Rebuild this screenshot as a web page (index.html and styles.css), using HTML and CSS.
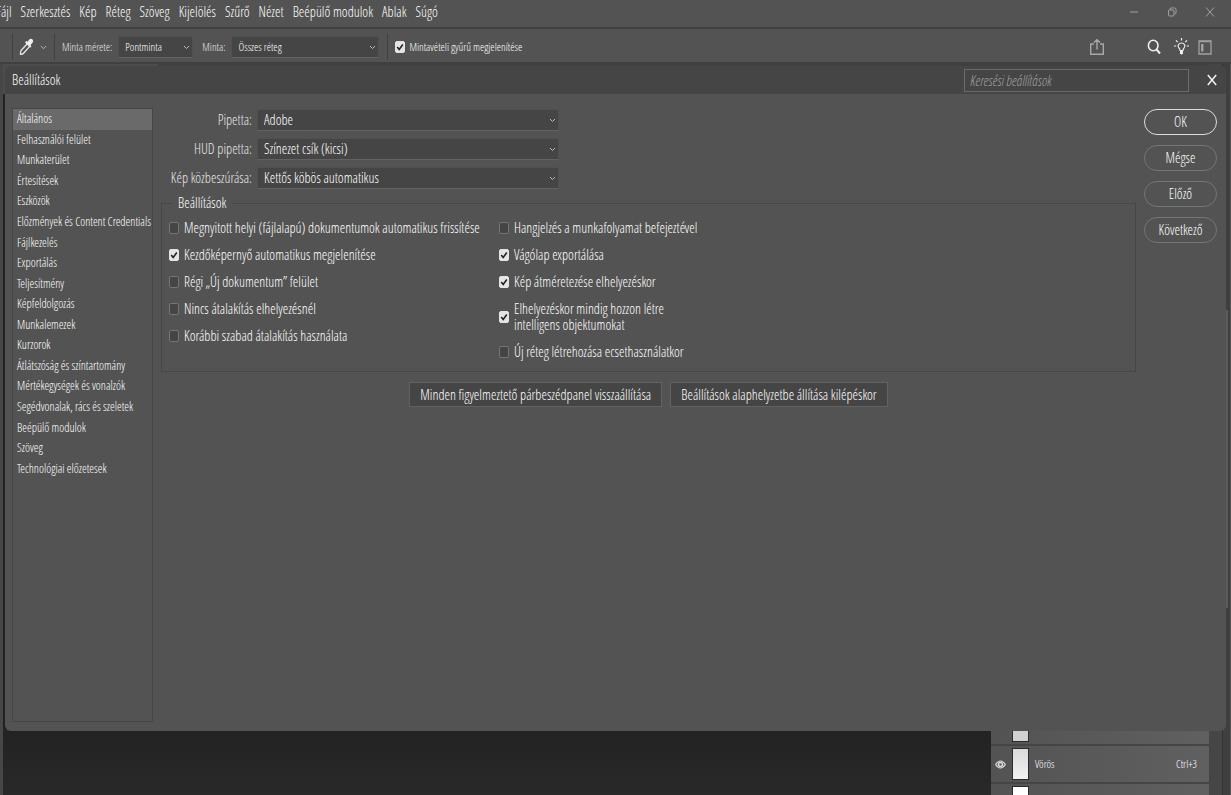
FILE: index.html
```html
<!DOCTYPE html>
<html lang="hu">
<head>
    <meta charset="UTF-8">
    <meta name="viewport" content="width=device-width, initial-scale=1.0">
    <title>Beállítások</title>
    <link rel="stylesheet" href="styles.css">
</head>
<body>
    <div class="app">
        <header class="menubar">
            <nav class="menu">
                <a href="#">Fájl</a>
                <a href="#">Szerkesztés</a>
                <a href="#">Kép</a>
                <a href="#">Réteg</a>
                <a href="#">Szöveg</a>
                <a href="#">Kijelölés</a>
                <a href="#">Szűrő</a>
                <a href="#">Nézet</a>
                <a href="#">Beépülő modulok</a>
                <a href="#">Ablak</a>
                <a href="#">Súgó</a>
            </nav>
            <div class="window-buttons">
                <button type="button" aria-label="Kis méret">
                    <svg width="10" height="10" viewBox="0 0 10 10"><path d="M1 5h8"/></svg>
                </button>
                <button type="button" aria-label="Előző méret">
                    <svg width="10" height="10" viewBox="0 0 10 10"><rect x="1.5" y="3" width="5.5" height="6" rx="1"/><path d="M3 3V2q0-1 1-1h3.500q1.500 0 1.500 1.500V6q0 1-1.500 1"/></svg>
                </button>
                <button type="button" aria-label="Bezárás">
                    <svg width="10" height="12" viewBox="0 0 10 12"><path d="M1 1.500l8 9M9 1.500l-8 9"/></svg>
                </button>
            </div>
        </header>

        <div class="toolbar">
            <button type="button" class="tool" aria-label="Pipetta">
                <svg class="eyedropper" width="15" height="18" viewBox="0 0 15 18">
                    <path d="M8 6L2.300 12.300Q1.200 13.500 1.500 16.300 3.800 16.300 4.800 15L10.400 8.600" fill="none" stroke="#e6e6e6" stroke-width="1.300"/>
                    <path d="M6 4.300l1.400-1.300 1.300.8L10.300 1.500Q12 .2 13.600 1.600q1.300 1.700-.2 3.400l-1.900 2 .9 1.400-1.400 1.400z" fill="#f0f0f0"/>
                </svg>
                <svg class="chevron" width="7" height="5" viewBox="0 0 7 5"><path d="M.8 1l2.700 2.700L6.200 1"/></svg>
            </button>
            <div class="tool-option">
                <label for="sampleSize">Minta mérete:</label>
                <select id="sampleSize" class="size-select"><option>Pontminta</option></select>
            </div>
            <div class="tool-option">
                <label for="sampleLayers">Minta:</label>
                <select id="sampleLayers" class="layer-select"><option>Összes réteg</option></select>
            </div>
            <label class="ring-option"><input type="checkbox" checked> Mintavételi gyűrű megjelenítése</label>
            <div class="toolbar-icons">
                <button type="button" class="share" aria-label="Megosztás">
                    <svg width="16" height="18" viewBox="0 0 16 18" fill="none" stroke="#a8a8a8" stroke-width="1.400"><path d="M5 6H1.700v10.300h12.600V6H11M8 11.500V2M5 4.500L8 1.600l3 2.900"/></svg>
                </button>
                <button type="button" aria-label="Keresés">
                    <svg width="14" height="16" viewBox="0 0 14 16" fill="none" stroke="#eee" stroke-width="1.600"><ellipse cx="6.200" cy="6.500" rx="4.800" ry="5.200"/><path d="M9.500 10.500l3.500 4" stroke-width="2"/></svg>
                </button>
                <button type="button" aria-label="Tippek">
                    <svg width="15" height="18" viewBox="0 0 15 18" fill="none" stroke="#eee" stroke-width="1.200"><path d="M7.500 0v2.500M2 2.300l1.700 1.900M13 2.300l-1.700 1.900M0 8h2.200M12.800 8H15M6 12.500q0-1.700-1.200-2.800Q3.700 8.300 4.400 6.800 5.400 5 7.500 5t3.100 1.800q.7 1.500-.4 2.900Q9 10.800 9 12.500z"/><path d="M6 13h3v2.300l-1.500 1.500L6 15.300z" fill="#eee" stroke="none"/></svg>
                </button>
                <button type="button" aria-label="Munkaterület">
                    <svg width="14" height="15" viewBox="0 0 14 15" fill="none" stroke="#a0a0a0" stroke-width="1.300"><path d="M1 1h12v13H1z"/><path d="M3 4h2.500v7.500H3z" fill="#a0a0a0" stroke="none"/><path d="M1 1.500h12" stroke-width="1.500"/></svg>
                </button>
            </div>
        </div>

        <main class="workspace">
            <div class="document">
                <div class="tabs"><div class="tab"></div></div>
                <div class="canvas"></div>
            </div>
            <section class="channels">
                <div class="channel"><span class="eye"></span><span class="thumb dim"></span></div>
                <div class="channel">
                    <svg class="eye" width="11" height="9" viewBox="0 0 11 9"><path d="M.7 4.500Q2.800 1 5.500 1t4.800 3.500Q8.200 8 5.500 8T.7 4.500z" fill="none" stroke="#ddd" stroke-width="1.200"/><circle cx="5.500" cy="4.500" r="2" fill="none" stroke="#ddd" stroke-width="1.500"/></svg>
                    <span class="thumb"></span>
                    <span class="name">Vörös</span>
                    <span class="shortcut">Ctrl+3</span>
                </div>
                <div class="channel clipped"><span class="eye"></span><span class="thumb light"></span></div>
            </section>
            <div class="dock"></div>
            <div class="rail"><div class="rail-thumb"></div></div>
        </main>

        <div class="dialog" role="dialog" aria-labelledby="dialogTitle">
            <div class="dialog-header">
                <h1 id="dialogTitle">Beállítások</h1>
                <input type="search" class="search" placeholder="Keresési beállítások" aria-label="Keresési beállítások">
                <button type="button" class="close" aria-label="Bezárás">
                    <svg width="10" height="12" viewBox="0 0 10 12"><path d="M.8 1l8.400 10M9.200 1L.8 11"/></svg>
                </button>
            </div>
            <div class="dialog-body">
                <aside class="sidebar">
                    <ul>
                        <li><a href="#" class="active">Általános</a></li>
                        <li><a href="#">Felhasználói felület</a></li>
                        <li><a href="#">Munkaterület</a></li>
                        <li><a href="#">Értesítések</a></li>
                        <li><a href="#">Eszközök</a></li>
                        <li><a href="#">Előzmények és Content Credentials</a></li>
                        <li><a href="#">Fájlkezelés</a></li>
                        <li><a href="#">Exportálás</a></li>
                        <li><a href="#">Teljesítmény</a></li>
                        <li><a href="#">Képfeldolgozás</a></li>
                        <li><a href="#">Munkalemezek</a></li>
                        <li><a href="#">Kurzorok</a></li>
                        <li><a href="#">Átlátszóság és színtartomány</a></li>
                        <li><a href="#">Mértékegységek és vonalzók</a></li>
                        <li><a href="#">Segédvonalak, rács és szeletek</a></li>
                        <li><a href="#">Beépülő modulok</a></li>
                        <li><a href="#">Szöveg</a></li>
                        <li><a href="#">Technológiai előzetesek</a></li>
                    </ul>
                </aside>
                <form class="settings">
                    <div class="fields">
                        <label for="picker">Pipetta:</label>
                        <select id="picker"><option>Adobe</option></select>
                        <label for="hud">HUD pipetta:</label>
                        <select id="hud"><option>Színezet csík (kicsi)</option></select>
                        <label for="interpolation">Kép közbeszúrása:</label>
                        <select id="interpolation"><option>Kettős köbös automatikus</option></select>
                    </div>
                    <fieldset>
                        <legend>Beállítások</legend>
                        <div class="options">
                            <div class="column">
                                <label><input type="checkbox"> Megnyitott helyi (fájlalapú) dokumentumok automatikus frissítése</label>
                                <label><input type="checkbox" checked> Kezdőképernyő automatikus megjelenítése</label>
                                <label><input type="checkbox"> Régi „Új dokumentum” felület</label>
                                <label><input type="checkbox"> Nincs átalakítás elhelyezésnél</label>
                                <label><input type="checkbox"> Korábbi szabad átalakítás használata</label>
                            </div>
                            <div class="column">
                                <label><input type="checkbox"> Hangjelzés a munkafolyamat befejeztével</label>
                                <label><input type="checkbox" checked> Vágólap exportálása</label>
                                <label><input type="checkbox" checked> Kép átméretezése elhelyezéskor</label>
                                <label><input type="checkbox" checked> <span>Elhelyezéskor mindig hozzon létre<br>intelligens objektumokat</span></label>
                                <label><input type="checkbox"> Új réteg létrehozása ecsethasználatkor</label>
                            </div>
                        </div>
                    </fieldset>
                    <div class="reset-buttons">
                        <button type="button">Minden figyelmeztető párbeszédpanel visszaállítása</button>
                        <button type="button">Beállítások alaphelyzetbe állítása kilépéskor</button>
                    </div>
                </form>
                <div class="actions">
                    <button type="button" class="primary">OK</button>
                    <button type="button">Mégse</button>
                    <button type="button">Előző</button>
                    <button type="button">Következő</button>
                </div>
            </div>
        </div>
    </div>
</body>
</html>
```
FILE: styles.css
```css
* {
    box-sizing: border-box;
}
body {
    margin: 0;
    background: #535353;
    color: #fff;
    font-family: "Open Sans Condensed Light", "Open Sans Condensed", "Roboto Condensed", sans-serif;
    font-size: 14px;
    font-weight: 300;
    line-height: 16px;
}
a {
    color: inherit;
    text-decoration: none;
}
button, input, select {
    font: inherit;
    color: inherit;
}
button {
    background: none;
    border: none;
    padding: 0;
}
svg {
    display: block;
}
.app {
    position: relative;
    height: 100vh;
    display: flex;
    flex-direction: column;
    overflow: hidden;
}

/* menu */
.menubar {
    flex: none;
    height: 29px;
    display: flex;
    justify-content: space-between;
    padding-bottom: 3px;
    border-bottom: 2px solid #404040;
}
.menu {
    display: flex;
    align-items: center;
    gap: 9px;
    margin-left: -4px;
    white-space: nowrap;
}
.window-buttons {
    display: flex;
    align-items: center;
    gap: 28px;
    padding-right: 16px;
}
.window-buttons svg {
    fill: none;
    stroke: #a0a0a0;
}

/* tool options */
.toolbar {
    flex: none;
    height: 35px;
    display: flex;
    align-items: center;
    padding: 3px 0 0 12px;
    border-bottom: 2px solid #404040;
    font-size: 11px;
    white-space: nowrap;
}
.tool {
    display: flex;
    align-items: center;
    gap: 6px;
    height: 26px;
    width: 43px;
    padding-left: 6px;
    border-left: 1px solid #404040;
    border-right: 1px solid #404040;
}
.chevron {
    fill: none;
    stroke: #bbb;
}
.tool-option {
    display: flex;
    align-items: center;
    padding-left: 7px;
}
.tool-option label {
    color: #e6e6e6;
    margin-right: 6px;
}
.tool-option + .tool-option {
    padding-left: 9px;
}
select {
    appearance: none;
    height: 22px;
    padding: 0 16px 0 6px;
    border: 1px solid #505050;
    border-bottom-color: #626262;
    border-radius: 0;
    background: #454545 url("data:image/svg+xml,%3Csvg xmlns='http://www.w3.org/2000/svg' width='7' height='5'%3E%3Cpath d='M1 1l2.500 2.500L6 1' fill='none' stroke='%23bbb'/%3E%3C/svg%3E") no-repeat right 2px center;
}
.size-select {
    width: 75px;
}
.layer-select {
    width: 148px;
}
.ring-option {
    display: flex;
    align-items: center;
    gap: 4px;
    height: 26px;
    margin-left: 8px;
    padding-left: 7px;
    border-left: 1px solid #404040;
}
input[type="checkbox"] {
    appearance: none;
    flex: none;
    width: 10px;
    height: 12px;
    margin: 0;
    border: 1px solid #757575;
    border-radius: 2px;
    background: #454545;
}
input[type="checkbox"]:checked {
    border-color: #e4e4e4;
    background: #e4e4e4 url("data:image/svg+xml,%3Csvg xmlns='http://www.w3.org/2000/svg' width='8' height='8'%3E%3Cpath d='M1.200 4l2 2.500L6.800 1.500' fill='none' stroke='%23222' stroke-width='1.600'/%3E%3C/svg%3E") no-repeat center;
}
.toolbar-icons {
    display: flex;
    align-items: center;
    gap: 13px;
    margin-left: auto;
    padding-right: 19px;
}
.toolbar-icons button + button + button + button {
    margin-left: -4px;
}
.toolbar-icons .share {
    margin-right: 29px;
}

/* workspace behind the dialog */
.workspace {
    flex: 1;
    min-height: 0;
    display: flex;
    border-left: 3px solid #474747;
    background: #3e3e3e;
}
.document {
    flex: 1;
    display: flex;
    flex-direction: column;
}
.tabs {
    height: 30px;
    background: #404040;
}
.tab {
    width: 155px;
    height: 100%;
    background: #4c4c4c;
}
.canvas {
    flex: 1;
    background: linear-gradient(#222 630px, #292929);
}
.channels {
    width: 218px;
    display: flex;
    flex-direction: column;
    justify-content: flex-end;
    background: #404040;
    font-size: 11px;
}
.channel {
    flex: none;
    height: 38px;
    display: flex;
    align-items: center;
    padding: 0 12px 0 4px;
    border-bottom: 2px solid #454545;
    background: linear-gradient(to right, #535353, #606060);
}
.eye {
    width: 11px;
}
.thumb {
    width: 17px;
    height: 32px;
    margin: 0 6px;
    border: 1px solid #2b2b2b;
    background: linear-gradient(#dadada, #f2f2f2);
}
.thumb.dim {
    background: #d0d0d0;
}
.thumb.light {
    background: #fff;
}
.shortcut {
    margin-left: auto;
}
.channel.clipped {
    height: 11px;
    align-items: flex-start;
    padding-top: 2px;
    border: none;
    overflow: hidden;
}
.dock {
    width: 14px;
    background: #464646;
    border-right: 1px solid #333;
}
.rail {
    width: 8px;
    padding: 246px 2px 0 3px;
    border-right: 1px solid #555;
    background: #3f3f3f;
}
.rail-thumb {
    height: 298px;
    background: #5c5c5c;
}

/* dialog */
.dialog {
    position: absolute;
    inset: 66px 5px 64px 5px;
    display: flex;
    flex-direction: column;
    border-radius: 6px;
    background: #535353;
    overflow: hidden;
}
.dialog-header {
    flex: none;
    height: 28px;
    display: flex;
    align-items: center;
    padding: 0 9px 0 7px;
    background: #454545;
}
h1 {
    margin: 0;
    font-size: 14px;
    font-weight: inherit;
}
.search {
    appearance: none;
    width: 225px;
    height: 23px;
    margin-left: auto;
    padding: 0 5px;
    border: 1px solid #6a6a6a;
    background: #454545;
    font-style: italic;
}
.search::placeholder {
    color: #a0a0a0;
}
.close {
    margin-left: 18px;
}
.close svg {
    fill: none;
    stroke: #f2f2f2;
    stroke-width: 1.5;
}
.dialog-body {
    flex: 1;
    min-height: 0;
    display: flex;
    padding: 14px 9px 9px 7px;
}
.sidebar {
    flex: none;
    width: 141px;
    border: 1px solid #464646;
    font-size: 12px;
}
.sidebar ul {
    display: grid;
    grid-auto-rows: 1fr;
    height: 370px;
    margin: 0;
    padding: 0;
    list-style: none;
}
.sidebar li {
    display: flex;
}
.sidebar a {
    flex: 1;
    display: flex;
    align-items: center;
    padding-left: 4px;
    white-space: nowrap;
}
.sidebar a.active {
    background: #6a6a6a;
}
.settings {
    flex: 1;
    margin: 0 8px;
}
.fields {
    display: grid;
    grid-template-columns: 91px 302px;
    column-gap: 5px;
    row-gap: 7px;
    align-items: center;
    padding-top: 1px;
}
.fields label {
    color: #e6e6e6;
    text-align: right;
    white-space: nowrap;
}
fieldset {
    min-width: 0;
    margin: 6px 0 0;
    padding: 9px 7px 11px;
    border: 1px solid #464646;
}
legend {
    margin-left: 3px;
    padding: 0 6px;
}
.options {
    display: grid;
    grid-template-columns: 330px 1fr;
}
.column {
    display: flex;
    flex-direction: column;
    gap: 11px;
}
.column label {
    display: flex;
    align-items: center;
    gap: 5px;
    white-space: nowrap;
}
.reset-buttons {
    display: flex;
    justify-content: center;
    gap: 8px;
    margin-top: 10px;
}
.reset-buttons button {
    height: 25px;
    padding: 0 10px;
    border: 1px solid #626262;
    background: #454545;
    white-space: nowrap;
}
.actions {
    flex: none;
    width: 73px;
    display: flex;
    flex-direction: column;
    gap: 10px;
    padding-top: 1px;
}
.actions button {
    height: 26px;
    border: 1px solid #757575;
    border-radius: 13px;
}
.actions .primary {
    border-color: #ddd;
}
```
